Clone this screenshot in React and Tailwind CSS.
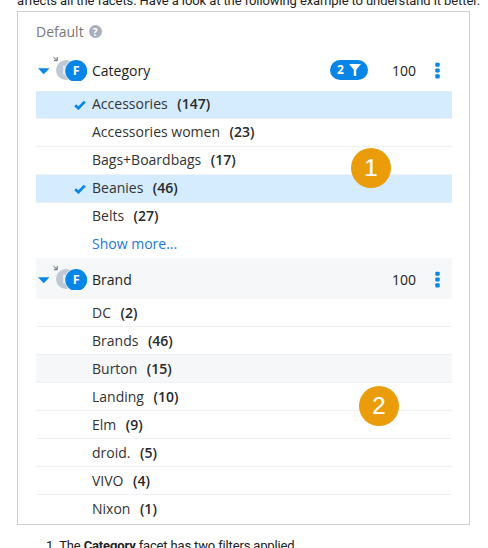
const categories = [
  { name: 'Accessories', count: 147, checked: true },
  { name: 'Accessories women', count: 23 },
  { name: 'Bags+Boardbags', count: 17 },
  { name: 'Beanies', count: 46, checked: true },
  { name: 'Belts', count: 27, last: true },
];

const brands = [
  { name: 'DC', count: 2 },
  { name: 'Brands', count: 46 },
  { name: 'Burton', count: 15, hovered: true },
  { name: 'Landing', count: 10 },
  { name: 'Elm', count: 9 },
  { name: 'droid.', count: 5 },
  { name: 'VIVO', count: 4 },
  { name: 'Nixon', count: 1, last: true },
];

function Check() {
  return (
    <svg width="12" height="10" viewBox="0 0 12 10" fill="none">
      <path d="M1.2 5.2 4.4 8.2 10.8 1.6" stroke="#0786e8" strokeWidth="2.7" />
    </svg>
  );
}

function Row({ item, textClass }) {
  const bg = item.checked ? 'bg-[#d4ecfe]' : item.hovered ? 'bg-[#f5f7f9]' : 'bg-white';
  const line = item.last ? 'border-transparent' : 'border-[#f0f1f2]';
  return (
    <div className={`flex h-7 items-center border-b ${bg} ${line}`}>
      <div className="flex w-14 justify-end pr-[6px] pt-px">{item.checked && <Check />}</div>
      <span className={`whitespace-pre text-[14px] leading-[25px] text-[#333] ${textClass}`}>
        {item.name}
        <b className="ml-[9.5px] font-semibold text-[#282828]">({item.count})</b>
      </span>
    </div>
  );
}

function FacetBadge() {
  return (
    <svg className="block" width="50" height="26" viewBox="0 0 50 26">
      <path d="M1 13.2H12.5L6.75 19.3Z" fill="#0786e8" />
      <circle cx="29" cy="15" r="10" fill="#bec9d5" />
      <path d="M27 10.5V19.5" stroke="#edf1f5" strokeWidth="1.6" />
      <circle cx="39.2" cy="16" r="11.5" fill="#fff" />
      <circle cx="39.2" cy="16" r="11" fill="#0786e8" />
      <text x="39.3" y="20.4" textAnchor="middle" fill="#fff" fontSize="12.5" fontWeight="700" fontFamily="Open Sans">F</text>
      <path d="M16.5 2.2 19.8 5.1M20.2 2V5.7H17" stroke="#58626d" strokeWidth="1" fill="none" />
    </svg>
  );
}

function Header({ title, filters, className }) {
  return (
    <div className={`flex items-center ${className}`}>
      <div className="w-14 pb-[5px] pl-[1px]"><FacetBadge /></div>
      <span className="flex-1 text-[14px] text-[#1c1c1c]">{title}</span>
      {filters && (
        <span className="mr-6 flex h-5 w-[38px] items-center justify-center gap-[5px] rounded-full bg-[#0786e8] text-[12px] font-bold text-white">
          {filters}
          <svg width="12" height="12" viewBox="0 0 12 12"><path d="M0 0H12L7.2 5.7V12H4.8V5.7Z" fill="#fff" /></svg>
        </span>
      )}
      <span className="w-[24px] text-[14px] text-[#222]">100</span>
      <svg className="ml-[19px] mr-[12px]" width="5" height="17" viewBox="0 0 5 17" fill="#0786e8">
        <rect x=".3" y=".7" width="4.4" height="4.1" rx="1" />
        <rect x=".3" y="6.5" width="4.4" height="4.1" rx="1" />
        <rect x=".3" y="12.3" width="4.4" height="4.1" rx="1" />
      </svg>
    </div>
  );
}

export default function App() {
  return (
    <div className="relative h-[548px] w-[488px] overflow-hidden bg-white font-['Open_Sans',sans-serif]">
      <div className="h-[11px] overflow-hidden pl-[17px]">
        <p className="-mt-[8px] whitespace-nowrap font-['Roboto',sans-serif] text-[13px] leading-[18px] tracking-[-0.095px] text-[#222]">
          affects all the facets. Have a look at the following example to understand it better.
        </p>
      </div>
      <div className="ml-[17px] h-[514px] w-[453px] border border-[#cfcfcf] pl-[18px] pr-[17px]">
        <div className="flex h-[39px] items-center gap-[5px] text-[14px] text-[#777]">
          Default
          <span className="flex h-[13px] w-[13px] items-center justify-center rounded-full bg-[#a9afbd] text-[10px] font-bold leading-none text-white">?</span>
        </div>
        <Header title="Category" filters={2} className="h-10 pb-[2px]" />
        {categories.map((c) => <Row key={c.name} item={c} textClass="pb-[2px]" />)}
        <div className="h-[28px] pl-14 text-[14px] leading-[26px] text-[#2078dc]">Show more...</div>
        <Header title="Brand" className="-mt-px h-[41px] bg-[#f5f7f9] pt-px" />
        {brands.map((b) => <Row key={b.name} item={b} textClass="pb-px" />)}
      </div>
      <p className="mt-[12px] whitespace-nowrap pl-[46px] font-['Roboto',sans-serif] text-[13px] leading-[18px] tracking-[-0.15px] text-[#222]">
        1. The <b>Category</b> facet has two filters applied.
      </p>
      <div className="absolute left-[351px] top-[148px] flex h-10 w-10 items-center justify-center rounded-full bg-[#eb9c0a] font-['Liberation_Sans',sans-serif] text-[24px] text-white [-webkit-text-stroke:0.2px_white]">1</div>
      <div className="absolute left-[359px] top-[386px] flex h-10 w-10 items-center justify-center rounded-full bg-[#eb9c0a] font-['Liberation_Sans',sans-serif] text-[24px] text-white [-webkit-text-stroke:0.2px_white]">2</div>
    </div>
  );
}
